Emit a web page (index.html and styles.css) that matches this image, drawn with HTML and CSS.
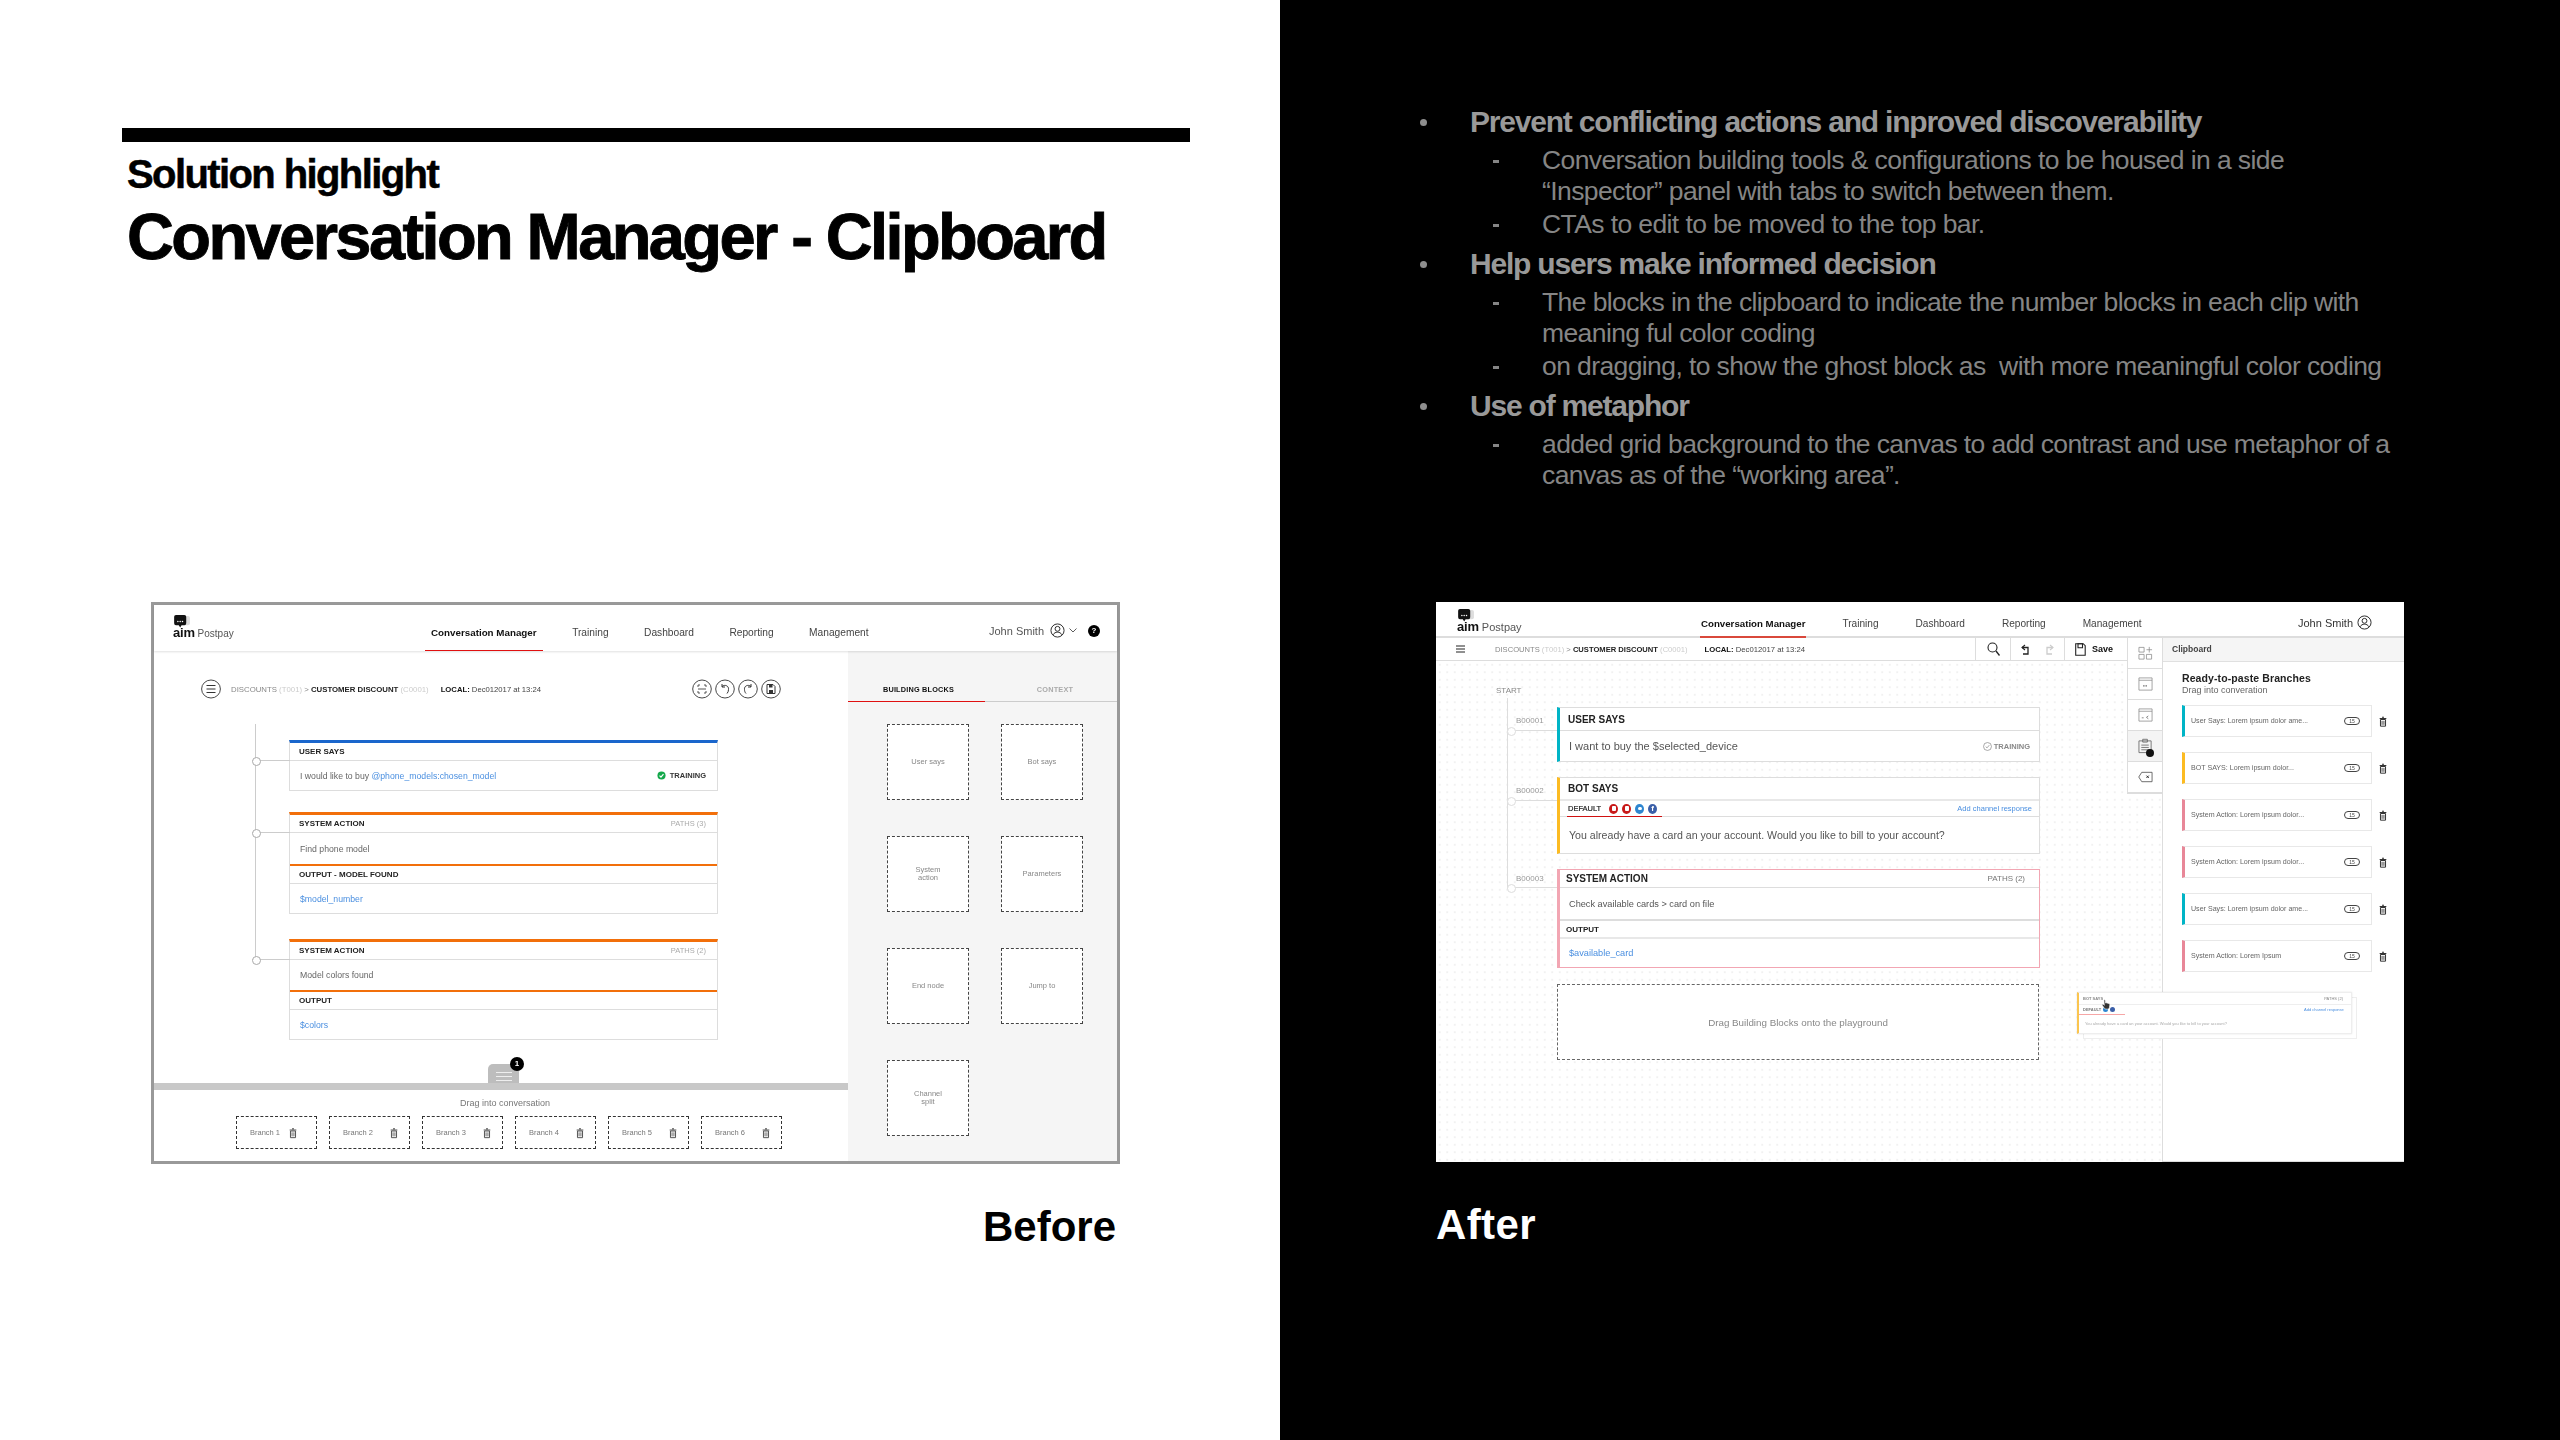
FILE: index.html
```html
<!DOCTYPE html>
<html lang="en">
<head>
<meta charset="utf-8">
<title>Solution highlight</title>
<link rel="stylesheet" href="styles.css">
</head>
<body>
<svg class="defs" width="0" height="0" aria-hidden="true">
  <symbol id="trash" viewBox="0 0 12 16"><path d="M4.500 1.500h3M1 3.500h10" fill="none" stroke="currentColor" stroke-width="1.600"/><path d="M2.200 5h7.600v10H2.200z" fill="none" stroke="currentColor" stroke-width="1.500"/><path d="M4.600 7v6M7.400 7v6" stroke="currentColor" stroke-width="1.300"/></symbol>
  <symbol id="logo" viewBox="0 0 20 14"><rect x="7" y="1" width="11" height="10" rx="2" fill="#ddd"/><path d="M3 0h9a2 2 0 0 1 2 2v7a2 2 0 0 1-2 2H9l-1.500 2.500L6 11H3a2 2 0 0 1-2-2V2a2 2 0 0 1 2-2z" fill="#111"/><circle cx="5" cy="7" r=".8" fill="#fff"/><circle cx="7.500" cy="7" r=".8" fill="#fff"/><circle cx="10" cy="7" r=".8" fill="#fff"/></symbol>
  <symbol id="avatar" viewBox="0 0 16 16"><circle cx="8" cy="8" r="7" fill="none" stroke="#222" stroke-width="1"/><circle cx="8" cy="6.200" r="2.600" fill="none" stroke="#222" stroke-width="1"/><path d="M3.300 12.600c1-2 2.700-2.800 4.700-2.800s3.700 .8 4.700 2.800" fill="none" stroke="#222" stroke-width="1"/></symbol>
</svg>
<main class="slide">
  <section class="half half-light">
    <div class="rule"></div>
    <h2 class="kicker">Solution highlight</h2>
    <h1 class="title">Conversation Manager - Clipboard</h1>

    <div class="before">
      <header class="b-head">
        <div class="logo b-logo"><svg class="logo-mark"><use href="#logo"/></svg><span class="logo-row"><b>aim</b> Postpay</span></div>
        <nav class="b-nav">
          <a class="on">Conversation Manager</a><a>Training</a><a>Dashboard</a><a>Reporting</a><a>Management</a>
        </nav>
        <div class="b-user"><span>John Smith</span><svg class="avatar"><use href="#avatar"/></svg><svg class="chev" viewBox="0 0 8 5"><path d="M.5 .5 4 4 7.500 .5" fill="none" stroke="#333" stroke-width=".8"/></svg><span class="help">?</span></div>
      </header>
      <div class="b-body">
        <div class="b-main">
          <div class="b-crumbs">
            <svg class="b-menu" viewBox="0 0 20 20"><ellipse cx="10" cy="10" rx="9.400" ry="9" fill="none" stroke="#333" stroke-width=".9"/><path d="M5.500 6.500h9M5.500 10h9M5.500 13.500h9" stroke="#333" stroke-width="1"/></svg>
            <span class="crumb"><i>DISCOUNTS</i> <em>(T001)</em> &gt; <b>CUSTOMER DISCOUNT</b> <em>(C0001)</em></span>
            <span class="local"><b>LOCAL:</b> Dec012017 at 13:24</span>
            <div class="b-tools">
              <svg viewBox="0 0 20 20"><ellipse cx="10" cy="10" rx="9.300" ry="9" fill="none" stroke="#333" stroke-width=".9"/><path d="M6 8V6h2M12 6h2v2M14 12v2h-2M8 14H6v-2M6 10h8" fill="none" stroke="#444" stroke-width=".9"/></svg>
              <svg viewBox="0 0 20 20"><ellipse cx="10" cy="10" rx="9.300" ry="9" fill="none" stroke="#333" stroke-width=".9"/><path d="M7 7.500c3-2.500 7-.5 6.500 3M13.500 10.500c0 1.500-.5 3-1.500 4M7 5v3h3" fill="none" stroke="#333" stroke-width="1"/></svg>
              <svg viewBox="0 0 20 20"><ellipse cx="10" cy="10" rx="9.300" ry="9" fill="none" stroke="#333" stroke-width=".9"/><path d="M13 7.500c-3-2.500-7-.5-6.500 3M6.500 10.500c0 1.500.5 3 1.500 4M13 5v3h-3" fill="none" stroke="#333" stroke-width="1"/></svg>
              <svg viewBox="0 0 20 20"><ellipse cx="10" cy="10" rx="9.300" ry="9" fill="none" stroke="#333" stroke-width=".9"/><path d="M6 5.500h6l2 2v7H6z" fill="none" stroke="#333"/><path d="M8 5.500h3.500v3H8zM8 11h4v3.500H8z" fill="#333"/></svg>
            </div>
          </div>
          <div class="b-flow">
            <div class="b-line"></div>
            <article class="b-card blue">
              <div class="b-node"></div>
              <div class="b-row head"><b>USER SAYS</b></div>
              <div class="b-row val"><span>I would like to buy <a class="link">@phone_models:chosen_model</a></span><span class="training"><svg viewBox="0 0 10 10"><circle cx="5" cy="5" r="4.500" fill="#14a84b"/><path d="M2.800 5.200 4.400 6.800 7.200 3.500" fill="none" stroke="#fff" stroke-width="1.300"/></svg><b>TRAINING</b></span></div>
            </article>
            <article class="b-card orange">
              <div class="b-node"></div>
              <div class="b-row head"><b>SYSTEM ACTION</b><span class="paths">PATHS (3)</span></div>
              <div class="b-row val tall">Find phone model</div>
              <div class="b-row head o-top"><b>OUTPUT - MODEL FOUND</b></div>
              <div class="b-row val"><a class="link">$model_number</a></div>
            </article>
            <article class="b-card orange later">
              <div class="b-node"></div>
              <div class="b-row head"><b>SYSTEM ACTION</b><span class="paths">PATHS (2)</span></div>
              <div class="b-row val mid">Model colors found</div>
              <div class="b-row head o-top"><b>OUTPUT</b></div>
              <div class="b-row val"><a class="link">$colors</a></div>
            </article>
          </div>
          <div class="b-drawer">
            <div class="b-handle"><span></span><span></span><span></span><i class="badge">1</i></div>
            <p>Drag into conversation</p>
            <div class="b-branches">
              <div class="branch"><span>Branch 1</span><svg><use href="#trash"/></svg></div>
              <div class="branch"><span>Branch 2</span><svg><use href="#trash"/></svg></div>
              <div class="branch"><span>Branch 3</span><svg><use href="#trash"/></svg></div>
              <div class="branch"><span>Branch 4</span><svg><use href="#trash"/></svg></div>
              <div class="branch"><span>Branch 5</span><svg><use href="#trash"/></svg></div>
              <div class="branch"><span>Branch 6</span><svg><use href="#trash"/></svg></div>
            </div>
          </div>
        </div>
        <aside class="b-side">
          <div class="b-tabs"><span class="on">BUILDING BLOCKS</span><span class="off">CONTEXT</span></div>
          <div class="b-blocks">
            <div class="block">User says</div>
            <div class="block">Bot says</div>
            <div class="block">System<br>action</div>
            <div class="block">Parameters</div>
            <div class="block">End node</div>
            <div class="block">Jump to</div>
            <div class="block">Channel<br>split</div>
          </div>
        </aside>
      </div>
    </div>
    <div class="caption cap-right">Before</div>
  </section>

  <section class="half half-dark">
    <ul class="points">
      <li><strong>Prevent conflicting actions and inproved discoverability</strong>
        <ul>
          <li>Conversation building tools &amp; configurations to be housed in a side “Inspector” panel with tabs to switch between them.</li>
          <li>CTAs to edit to be moved to the top bar.</li>
        </ul>
      </li>
      <li><strong>Help users make informed decision</strong>
        <ul>
          <li>The blocks in the clipboard to indicate the number blocks in each clip with meaning ful color coding</li>
          <li>on dragging, to show the ghost block as &nbsp;with more meaningful color coding</li>
        </ul>
      </li>
      <li><strong>Use of metaphor</strong>
        <ul>
          <li>added grid background to the canvas to add contrast and use metaphor of a canvas as of the “working area”.</li>
        </ul>
      </li>
    </ul>

    <div class="after">
      <header class="a-head">
        <div class="logo a-logo"><svg class="logo-mark"><use href="#logo"/></svg><span class="logo-row"><b>aim</b> Postpay</span></div>
        <nav class="a-nav">
          <a class="on">Conversation Manager</a><a>Training</a><a>Dashboard</a><a>Reporting</a><a>Management</a>
        </nav>
        <div class="a-user"><span>John Smith</span><svg class="avatar"><use href="#avatar"/></svg></div>
      </header>
      <div class="a-body">
        <div class="a-work">
          <div class="a-bar">
            <svg class="a-menu" viewBox="0 0 9 8"><path d="M0 1h9M0 4h9M0 7h9" stroke="#222" stroke-width="1.200"/></svg>
            <span class="crumb"><i>DISCOUNTS</i> <em>(T001)</em> &gt; <b>CUSTOMER DISCOUNT</b> <em>(C0001)</em></span>
            <span class="local"><b>LOCAL:</b> Dec012017 at 13:24</span>
            <div class="a-cell search"><svg viewBox="0 0 13 14"><circle cx="5.500" cy="5.500" r="4.500" fill="none" stroke="#222" stroke-width="1.100"/><path d="M9 9l3.500 4.500" stroke="#222" stroke-width="1.300"/></svg></div>
            <div class="a-cell undo"><svg viewBox="0 0 9 11"><path d="M4 1 1 3.500 4 6" fill="none" stroke="#222" stroke-width="1.100"/><path d="M1 3.500h6v6.500H2" fill="none" stroke="#222" stroke-width="1.300"/></svg><svg viewBox="0 0 9 11"><path d="M5 1l3 2.500L5 6" fill="none" stroke="#ccc" stroke-width="1.100"/><path d="M8 3.500H2v6.500h5" fill="none" stroke="#ccc" stroke-width="1.300"/></svg></div>
            <div class="a-cell save"><svg viewBox="0 0 11 13"><path d="M.7 .7h7.500l2 2v9.600H.7z" fill="none" stroke="#222" stroke-width="1.100"/><path d="M3 .7h4.500v4H3z" fill="none" stroke="#222" stroke-width="1.100"/></svg><b>Save</b></div>
          </div>
          <div class="a-canvas">
            <div class="a-start">START</div>
            <div class="a-flow">
              <div class="a-line"></div>
              <div class="a-row">
                <span class="a-id">B00001</span>
                <article class="a-card teal">
                  <div class="a-node"></div>
                  <div class="a-h h23"><b>USER SAYS</b></div>
                  <div class="a-v big h30"><span>I want to buy the $selected_device</span><span class="a-training"><svg viewBox="0 0 10 10"><circle cx="5" cy="5" r="4.400" fill="none" stroke="#888" stroke-width=".8"/><path d="M3 5.200 4.500 6.500 7 3.500" fill="none" stroke="#888" stroke-width=".8"/></svg>TRAINING</span></div>
                </article>
              </div>
              <div class="a-row">
                <span class="a-id">B00002</span>
                <article class="a-card yellow">
                  <div class="a-node"></div>
                  <div class="a-h h23 thick"><b>BOT SAYS</b></div>
                  <div class="a-tabs">
                    <span class="a-default"><b>DEFAULT</b>
                      <i class="soc red"></i><i class="soc red"></i><i class="soc tw"></i><i class="soc fb">f</i>
                    </span>
                    <a class="link">Add channel response</a>
                  </div>
                  <div class="a-v h36">You already have a card an your account. Would you like to bill to your account?</div>
                </article>
              </div>
              <div class="a-row">
                <span class="a-id">B00003</span>
                <article class="a-card pink">
                  <div class="a-node"></div>
                  <div class="a-h h18 tight"><b>SYSTEM ACTION</b><span class="a-paths">PATHS (2)</span></div>
                  <div class="a-v h31 small">Check available cards &gt; card on file</div>
                  <div class="a-h h20 tight thick top"><b class="tiny">OUTPUT</b></div>
                  <div class="a-v h28 small"><a class="link">$available_card</a></div>
                </article>
              </div>
            </div>
            <div class="a-drop">Drag Building Blocks onto the playground</div>
          </div>
          <div class="a-rail">
            <div class="rail-cell"><svg viewBox="0 0 16 14"><path d="M1 1h5.500v5H1zM1 8.500h5.500v5H1zM9 8.500h5.500v5H9zM9 3.500h6M12 .5v6" fill="none" stroke="#888" stroke-width=".8"/></svg></div>
            <div class="rail-cell"><svg viewBox="0 0 16 14"><path d="M1 .5h14v13H1zM1 3h14" fill="none" stroke="#888" stroke-width=".8"/><path d="M5.500 9h5" stroke="#666" stroke-width="1.200" stroke-dasharray="1.500 1"/></svg></div>
            <div class="rail-cell"><svg viewBox="0 0 16 14"><path d="M1 .5h14v13H1zM1 3h14" fill="none" stroke="#888" stroke-width=".8"/><path d="M4 10h2M11 8l-2 1.500 2 1.500" fill="none" stroke="#666" stroke-width=".8"/></svg></div>
            <div class="rail-cell on"><svg viewBox="0 0 16 17"><path d="M1 2.500h13v12.500H1z" fill="none" stroke="#666" stroke-width=".9"/><path d="M5 .8h5v3H5zM3.500 7h8M3.500 9.500h8M3.500 12h8" fill="none" stroke="#666" stroke-width=".9"/></svg><i class="rail-badge"></i></div>
            <div class="rail-cell"><svg viewBox="0 0 16 12"><path d="M4 1h11v10H4L.8 6z" fill="none" stroke="#555" stroke-width=".9"/><path d="M9 4.500l2.500 2.500M11.500 4.500 9 7" stroke="#222"/></svg></div>
          </div>
          <article class="ghost">
            <div class="ghost-card"></div>
            <div class="ghost-card main">
              <div class="g-h"><b>BOT SAYS</b><span>PATHS (2)</span></div>
              <div class="g-t"><b>DEFAULT</b><i class="soc tw"></i><i class="soc fb"></i><a class="link">Add channel response</a></div>
              <div class="g-v">You already have a card an your account. Would you like to bill to your account?</div>
            </div>
            <svg class="hand" viewBox="0 0 12 14"><path d="M3.500 1.500c.8-.7 1.500 0 1.600 .8l.4 3 .8-.3 3 .8c1 .3 1.400 1 1.200 2L10 11c-.2 1-.8 1.500-2 1.500H6c-1 0-1.500-.4-2-1L1.500 8c-.5-1 .5-1.800 1.500-1l1 1z" fill="#333" stroke="#fff" stroke-width=".7"/></svg>
          </article>
        </div>
        <aside class="a-panel">
          <div class="a-panel-head">Clipboard</div>
          <div class="a-panel-body">
            <h3>Ready-to-paste Branches</h3>
            <p>Drag into converation</p>
            <div class="clips">
              <div class="clip"><div class="clip-box teal"><span>User Says: Lorem ipsum dolor ame...</span><i class="pill">15</i></div><svg class="clip-del"><use href="#trash"/></svg></div>
              <div class="clip"><div class="clip-box yellow"><span>BOT SAYS: Lorem ipsum dolor...</span><i class="pill">15</i></div><svg class="clip-del"><use href="#trash"/></svg></div>
              <div class="clip"><div class="clip-box rose"><span>System Action: Lorem ipsum dolor...</span><i class="pill">15</i></div><svg class="clip-del"><use href="#trash"/></svg></div>
              <div class="clip"><div class="clip-box rose"><span>System Action: Lorem ipsum dolor...</span><i class="pill">15</i></div><svg class="clip-del"><use href="#trash"/></svg></div>
              <div class="clip"><div class="clip-box teal"><span>User Says: Lorem ipsum dolor ame...</span><i class="pill">15</i></div><svg class="clip-del"><use href="#trash"/></svg></div>
              <div class="clip"><div class="clip-box rose"><span>System Action: Lorem Ipsum</span><i class="pill">15</i></div><svg class="clip-del"><use href="#trash"/></svg></div>
            </div>
          </div>
        </aside>
      </div>
    </div>
    <div class="caption">After</div>
  </section>
</main>
</body>
</html>
```
FILE: styles.css
```css
* { box-sizing: border-box; }
html, body { margin: 0; padding: 0; }
body { width: 2560px; height: 1440px; overflow: hidden; font-family: "Liberation Sans", Arial, sans-serif; color: #111; }
.defs { position: absolute; }
i, em { font-style: normal; }
a { text-decoration: none; color: inherit; }
h1, h2, h3, p, ul { margin: 0; padding: 0; }
.slide { display: flex; width: 2560px; height: 1440px; }
.half { width: 1280px; height: 1440px; }
.half-light { background: #fff; padding: 128px 90px 0 122px; }
.half-dark { background: #000; padding: 104px 0 0 156px; }

.rule { height: 14px; background: #000; }
.kicker { margin: 10px 0 0 5px; font-size: 40px; line-height: 44px; font-weight: 700; letter-spacing: -1.600px; color: #000; -webkit-text-stroke: .5px #000; }
.title { margin: 5px 0 0 5px; font-size: 65px; line-height: 72px; font-weight: 700; letter-spacing: -2.600px; color: #000; white-space: nowrap; -webkit-text-stroke: .9px #000; }
.caption { font-size: 42px; line-height: 48px; font-weight: 700; color: #000; margin-top: 39px; letter-spacing: 0; }
.half-dark .caption { color: #fff; letter-spacing: .4px; }
.cap-right { text-align: right; padding-right: 74px; }

/* right-hand text */
.points { list-style: none; margin-left: -156px; padding-left: 110px; width: 1120px; height: 498px; }
.points > li { position: relative; padding-left: 80px; margin-top: 6px; }
.points > li:first-child { margin-top: 0; }
.points > li::before { content: ""; position: absolute; left: 30px; top: 15px; width: 7px; height: 7px; border-radius: 50%; background: #8e8e8e; }
.points strong { display: block; font-size: 30px; line-height: 36px; letter-spacing: -1.200px; color: #999; }
.points ul { list-style: none; margin-top: 5px; }
.points ul li { position: relative; padding-left: 72px; font-size: 26.500px; line-height: 31px; letter-spacing: -.6px; color: #858585; }
.points ul li + li { margin-top: 2px; }
.points ul li::before { content: ""; position: absolute; left: 23px; top: 15px; width: 6px; height: 3px; background: #858585; }

/* shared mock bits */
.logo { display: flex; flex-direction: column; }
.logo-mark { width: 19px; height: 13px; display: block; }
.logo-row { display: block; font-size: 10px; line-height: 11px; margin-top: -1px; color: #555; white-space: nowrap; }
.logo-row b { font-size: 13px; color: #111; letter-spacing: -.2px; }
.avatar { width: 15px; height: 15px; flex: none; }
.crumb { font-size: 7.800px; color: #888; white-space: nowrap; }
.crumb b { color: #222; }
.crumb em { color: #ccc; }
.local { font-size: 7.700px; color: #444; white-space: nowrap; }
.local b { color: #111; }
.link { color: #4a8fe0; }
.teal { border-left-color: #00b4c6 !important; }
.yellow { border-left-color: #fcbb22 !important; }

/* before mock */
.before { width: 969px; height: 562px; margin: 329px 0 0 29px; border: 3px solid #999; background: #fff; display: flex; flex-direction: column; filter: blur(.3px); }
.b-head { height: 46px; flex: none; display: flex; align-items: flex-start; position: relative; box-shadow: 0 1px 2px rgba(0,0,0,.12); z-index: 1; padding-left: 19px; }
.b-logo { width: 252px; padding-top: 10px; }
.b-nav { display: flex; font-size: 10.200px; color: #444; padding-top: 22px; }
.b-nav a { height: 24px; padding: 0 6px; margin-right: 23.500px; white-space: nowrap; }
.b-nav a.on { font-size: 9.800px; font-weight: 700; color: #111; border-bottom: 1px solid #e01010; }
.b-user { position: absolute; right: 17px; top: 18px; display: flex; align-items: center; font-size: 11px; color: #555; gap: 6px; }
.chev { width: 8px; height: 5px; margin-left: -2px; }
.help { width: 12px; height: 12px; margin-left: 5px; border-radius: 50%; background: #000; color: #fff; font-size: 8px; line-height: 12px; text-align: center; font-weight: 700; }
.b-body { flex: 1; display: flex; min-height: 0; }
.b-main { width: 694px; display: flex; flex-direction: column; position: relative; }
.b-crumbs { display: flex; align-items: center; height: 20px; margin: 28px 0 0 47px; }
.b-menu { width: 20px; height: 20px; flex: none; }
.b-crumbs .crumb { margin-left: 10px; }
.b-crumbs .local { margin-left: 12px; }
.b-tools { display: flex; gap: 3px; margin-left: auto; margin-right: 67px; }
.b-tools svg { width: 20px; height: 20px; }
.b-flow { position: relative; margin: 41px 0 0 135px; width: 429px; }
.b-line { position: absolute; left: -34px; top: -16px; bottom: 80px; width: 1px; background: #ccc; }
.b-card { position: relative; border: 1px solid #ddd; border-top: 3px solid #1a66cc; background: #fff; }
.b-card.orange { border-top-color: #f26f0a; margin-top: 21px; }
.b-card.later { margin-top: 25px; }
.b-node { position: absolute; left: -38px; top: 17px; width: 38px; height: 1px; background: #ccc; }
.b-node::before { content: ""; position: absolute; left: 0; top: -3px; width: 7px; height: 7px; border-radius: 50%; border: 1px solid #aaa; background: #fff; }
.b-row { display: flex; align-items: center; justify-content: space-between; padding: 0 11px 0 9px; font-size: 8.700px; color: #666; }
.b-row.head { height: 18px; border-bottom: 1px solid #ddd; font-size: 8px; color: #222; }
.b-row.val { height: 29px; padding-left: 10px; }
.b-row.val.tall { height: 31px; }
.b-row.val.mid { height: 30px; }
.b-row.o-top { height: 20px; border-top: 2px solid #f26f0a; }
.paths { font-size: 7.500px; color: #aaa; }
.training { display: flex; align-items: center; gap: 4px; font-size: 7.500px; color: #333; }
.training svg { width: 9px; height: 9px; }
.b-drawer { margin-top: auto; height: 78px; border-top: 7px solid #c8c8c8; position: relative; text-align: center; }
.b-handle { position: absolute; left: 334px; top: -26px; width: 31px; height: 19px; background: #bdbdbd; border-radius: 5px 5px 0 0; display: flex; flex-direction: column; align-items: center; justify-content: flex-end; gap: 3px; padding-bottom: 2px; }
.b-handle span { width: 16px; height: 1px; background: #eee; }
.badge { position: absolute; right: -5px; top: -7px; width: 14px; height: 14px; border-radius: 50%; background: #000; color: #fff; font-size: 8px; line-height: 14px; text-align: center; font-weight: 700; }
.b-drawer p { font-size: 9px; line-height: 11px; color: #777; margin: 8px 0 0 8px; }
.b-branches { display: flex; gap: 12px; justify-content: center; margin: 7px 0 0 16px; }
.branch { width: 81px; height: 33px; border: 1px dashed #333; display: flex; align-items: center; justify-content: space-between; padding: 0 11px 0 13px; font-size: 7.500px; color: #777; background: #fff; }
.branch:first-child { padding-right: 19px; }
.branch svg { width: 8px; height: 12px; color: #555; }
.b-side { flex: 1; background: #f5f5f5; }
.b-tabs { display: flex; margin-top: 26px; height: 25px; font-size: 7.300px; font-weight: 700; }
.b-tabs span { display: flex; align-items: center; justify-content: center; border-bottom: 1px solid #ccc; color: #aaa; letter-spacing: .2px; }
.b-tabs .on { width: 137px; border-bottom: 1px solid #e01010; color: #111; padding-left: 4px; }
.b-tabs .off { flex: 1; padding-left: 8px; }
.b-blocks { display: grid; grid-template-columns: 82px 82px; grid-auto-rows: 76px; column-gap: 32px; row-gap: 36px; margin: 22px 0 0 39px; }
.block { border: 1px dashed #444; background: #fff; display: flex; align-items: center; justify-content: center; text-align: center; font-size: 7.500px; line-height: 8px; color: #888; }

/* after mock */
.after { width: 968px; height: 560px; background: #fff; display: flex; flex-direction: column; filter: blur(.3px); }
.a-head { height: 36px; flex: none; border-bottom: 2px solid #ddd; display: flex; position: relative; padding-left: 21px; }
.a-logo { width: 243px; padding-top: 7px; }
.a-logo .logo-row { font-size: 11px; }
.a-nav { display: flex; font-size: 10.100px; color: #444; padding-top: 16px; }
.a-nav a { height: 20px; padding: 0 1px; margin-right: 35px; white-space: nowrap; }
.a-nav a.on { font-size: 9.700px; font-weight: 700; color: #111; border-bottom: 2px solid #d9483b; }
.a-user { position: absolute; right: 32px; top: 13px; display: flex; align-items: center; gap: 4px; font-size: 11px; color: #333; }
.a-body { flex: 1; display: flex; min-height: 0; }
.a-work { width: 726px; display: flex; flex-direction: column; position: relative; }
.a-bar { width: 691px; height: 23px; flex: none; border-bottom: 1px solid #ddd; display: flex; align-items: center; padding-left: 20px; }
.a-menu { width: 9px; height: 8px; flex: none; }
.a-bar .crumb { margin-left: 30px; font-size: 7.600px; }
.a-bar .local { margin-left: 17px; }
.a-cell { height: 23px; display: flex; align-items: center; justify-content: center; border-left: 1px solid #ddd; flex: none; }
.search { width: 35px; margin-left: auto; }
.search svg { width: 13px; height: 14px; }
.undo { width: 54px; gap: 15px; }
.undo svg { width: 9px; height: 11px; }
.save { width: 63px; gap: 6px; font-size: 9px; color: #111; padding-right: 4px; }
.save svg { width: 11px; height: 13px; }
.a-canvas { flex: 1; background-image: radial-gradient(circle, #f1f1f1 .8px, transparent 1.200px); background-size: 7.500px 7.500px; padding: 24px 0 0 60px; }
.a-start { font-size: 8px; line-height: 12px; color: #888; height: 12px; }
.a-flow { position: relative; margin-top: 10px; display: flex; flex-direction: column; gap: 15px; }
.a-line { position: absolute; left: 11px; top: -9px; bottom: 79px; width: 1px; background: #ddd; }
.a-row { display: flex; align-items: flex-start; padding-left: 20px; }
.a-id { width: 41px; padding-top: 9px; font-size: 8px; line-height: 10px; color: #999; flex: none; }
.a-row:nth-child(4) .a-id { padding-top: 5px; }
.a-card { position: relative; width: 483px; border: 1px solid #ddd; border-left: 3px solid; background: #fff; }
.a-card.pink { border-color: #f2a6b3; }
.a-node { position: absolute; left: -53px; top: 22px; width: 50px; height: 1px; background: #ddd; }
.a-node::before { content: ""; position: absolute; left: 0; top: -3px; width: 7px; height: 7px; border-radius: 50%; border: 1px solid #ddd; background: #fff; }
.pink .a-node { top: 17px; }
.a-h { display: flex; align-items: center; justify-content: space-between; padding: 0 14px 0 8px; border-bottom: 1px solid #ddd; font-size: 10px; color: #222; }
.h23 { height: 23px; }
.h18 { height: 18px; }
.h20 { height: 20px; }
.thick { border-bottom-width: 2px; border-bottom-color: #e8e8e8; }
.tight { padding-left: 6px; }
.tiny { font-size: 8px; }
.top { border-top: 2px solid #ddd; }
.a-paths { font-size: 8px; color: #777; }
.a-v { display: flex; align-items: center; justify-content: space-between; padding: 0 9px 0 9px; font-size: 10.600px; color: #555; }
.a-v.big { font-size: 11px; }
.h30 { height: 30px; }
.h31 { height: 31px; }
.h36 { height: 36px; }
.h28 { height: 28px; }
.a-v.small { font-size: 9.200px; }
.a-training { display: flex; align-items: center; gap: 2px; font-size: 7.500px; color: #888; font-weight: 700; }
.a-training svg { width: 9px; height: 9px; }
.a-tabs { height: 16px; display: flex; align-items: stretch; justify-content: space-between; padding: 0 7px 0 7px; border-bottom: 1px solid #ddd; font-size: 7.500px; }
.a-tabs .link { align-self: center; }
.a-default { display: flex; align-items: center; gap: 4px; border-bottom: 1px solid #d01010; width: 95px; margin-bottom: -1px; padding-left: 1px; color: #222; }
.a-default b { margin-right: 4px; font-weight: 400; -webkit-text-stroke: .2px #222; }
.soc { width: 9px; height: 10px; border-radius: 50%; flex: none; display: flex; align-items: center; justify-content: center; font-size: 8px; line-height: 10px; font-weight: 700; color: #fff; }
.soc.red { background: #c81818; }
.soc.red::after { content: ""; width: 4px; height: 5px; border-radius: 1px; background: #fff; }
.soc.tw { background: #2e86d0; }
.soc.tw::after { content: ""; width: 4px; height: 3px; border-radius: 2px; background: #fff; }
.soc.fb { background: #3b5fa8; }
.a-drop { margin: 16px 0 0 61px; width: 482px; height: 76px; border: 1px dashed #666; background: #fff; display: flex; align-items: center; justify-content: center; font-size: 9.800px; color: #888; }
.a-rail { position: absolute; left: 691px; top: 0; width: 35px; background: #fff; border: 1px solid #ddd; border-top: 0; border-right: 0; }
.rail-cell { position: relative; height: 31px; display: flex; align-items: center; justify-content: center; border-bottom: 1px solid #ddd; }
.rail-cell.on { background: #f4f4f4; }
.rail-cell svg { width: 15px; height: 14px; }
.rail-cell.on svg { height: 17px; }
.rail-badge { position: absolute; right: 8px; bottom: 4px; width: 8px; height: 8px; border-radius: 50%; background: #111; }
.a-panel { flex: 1; border-left: 1px solid #ddd; border-bottom: 1px solid #ddd; }
.a-panel-head { height: 24px; background: #f5f5f5; border-bottom: 1px solid #e0e0e0; padding-left: 9px; font-size: 8.500px; line-height: 23px; font-weight: 700; color: #444; }
.a-panel-body { padding: 10px 0 0 19px; }
.a-panel-body h3 { font-size: 10.500px; line-height: 12px; letter-spacing: .1px; color: #222; }
.a-panel-body p { font-size: 9px; line-height: 12px; color: #666; }
.clips { display: flex; flex-direction: column; gap: 15px; margin-top: 9px; }
.clip { display: flex; align-items: center; }
.clip-box { width: 190px; height: 32px; border: 1px solid #e8e8e8; border-left: 3px solid; display: flex; align-items: center; padding: 0 11px 0 6px; font-size: 7.100px; color: #666; }
.clip-box.rose { border-left-color: #e88798; }
.clip-box span { flex: 1; white-space: nowrap; }
.pill { width: 16px; height: 8px; border: 1px solid #444; border-radius: 4px; font-size: 5px; line-height: 6px; text-align: center; color: #444; }
.clip-del { width: 8px; height: 11px; margin-left: 7px; color: #333; }
.ghost { position: absolute; left: 641px; top: 354px; width: 280px; height: 47px; }
.ghost-card { position: absolute; left: 6px; top: 5px; width: 274px; height: 42px; background: #fff; border: 1px solid #eee; }
.ghost-card.main { left: 0; top: 0; width: 275px; border-left: 2px solid #fbc54f; box-shadow: 0 0 2px rgba(0,0,0,.1); font-size: 4px; color: #aaa; }
.g-h { height: 12px; display: flex; align-items: center; justify-content: space-between; padding: 0 8px 0 4px; border-bottom: 1px solid #eee; color: #888; }
.g-t { height: 10px; display: flex; align-items: center; gap: 2px; padding-left: 4px; color: #777; border-bottom: 1px solid #f6a6a6; width: 46px; white-space: nowrap; position: relative; }
.g-t .soc { width: 5px; height: 5px; }
.g-t .soc::after { display: none; }
.g-t .link { position: absolute; left: 225px; }
.g-v { padding: 6px 0 0 6px; }
.hand { position: absolute; left: 24px; top: 6px; width: 10px; height: 13px; }
```
